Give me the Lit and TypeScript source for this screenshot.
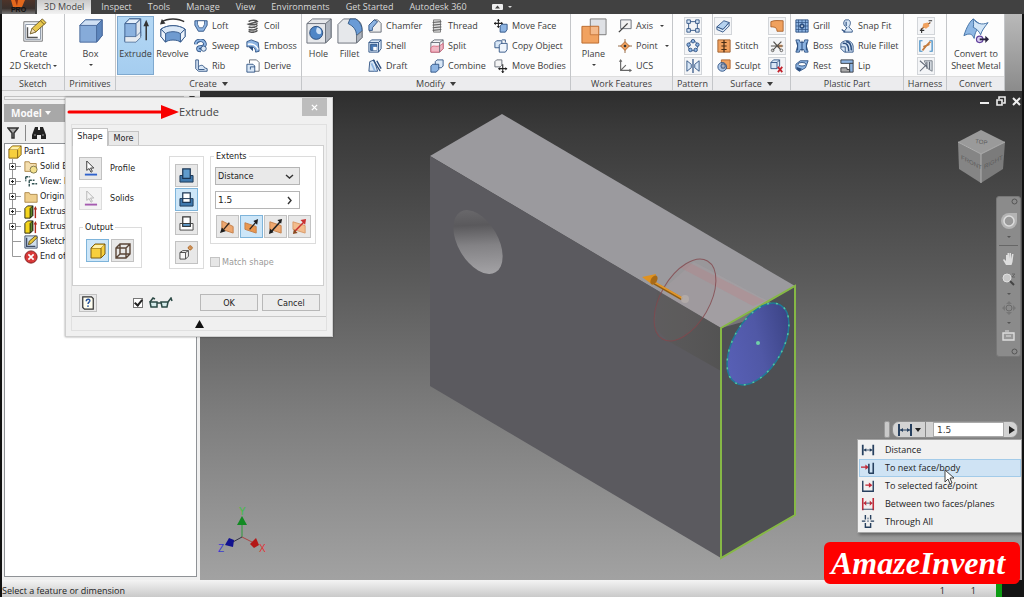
import { LitElement, html, svg, css, SVGTemplateResult, TemplateResult } from "lit";
import { customElement, state } from "lit/decorators.js";
import { classMap } from "lit/directives/class-map.js";

type Glyph = SVGTemplateResult;

const N = "#2c4f80";
const B = "#8db4e2";
const L = "#d9e7f6";
const G = "#5f6670";
const O = "#f0a15e";

/* 16 x 16 ribbon glyphs */
const glyphs: Record<string, Glyph> = {
  loft: svg`<path d="M1 2h14v5l-4 7H5L1 7z" fill=${B} stroke=${N}/><path d="M4 2v4l2 4h4l2-4V2z" fill="#fff" stroke=${N} stroke-width=".8"/>`,
  sweep: svg`<path d="M2 6c0-5 8-6 10-2s-2 5-5 5-4 4 1 4" fill="none" stroke=${N} stroke-width="4"/><path d="M2 6c0-5 8-6 10-2s-2 5-5 5-4 4 1 4" fill="none" stroke=${B} stroke-width="2.2"/><circle cx="11" cy="11" r="3" fill=${L} stroke=${N}/>`,
  rib: svg`<path d="M2 1h3v8c3-3 6-2 7 1l3 1v3H5l-3-3z" fill=${L} stroke=${N}/><path d="M5 9v3h7" fill="none" stroke=${N}/>`,
  coil: svg`<g fill="none" stroke="#555" stroke-width="1.8"><path d="M3 3c2-2 9-2 10 0L3 6c2 1 9 1 10-1M3 9c2 1 9 1 10-2M3 12c2 1 9 1 10-2M3 14c2 2 9 1 10-1"/></g>`,
  emboss: svg`<path d="M1 3l5-2 8 3 1 10-4 1C11 9 7 8 1 9z" fill=${B} stroke=${N}/><path d="M2 6c5-1 10 1 12 6" fill="none" stroke="#fff" stroke-width="1.6"/><path d="M3 9h5v5z" fill=${N}/>`,
  derive: svg`<path d="M4 5V1h8l3 3v10H9" fill="#fff" stroke=${G}/><path d="M1 6h7l2 2v7H1z" fill=${L} stroke=${N}/><path d="M5 12V9h5" fill="none" stroke=${N}/>`,
  chamfer: svg`<path d="M2 7l5-6h4l4 4v10H2z" fill="#eee" stroke=${G}/><path d="M1 7l6-6 4 2-6 7v3H1z" fill=${B} stroke=${N}/>`,
  shell: svg`<path d="M1 4l3-3h11v10l-3 4H1z" fill=${L} stroke=${N}/><path d="M1 4h11v11M12 4l3-3" fill="none" stroke=${N}/><path d="M3 6h7v7H3z" fill="#4a7ab5" stroke=${N}/><path d="M6 9h4v4H6z" fill="#fff"/>`,
  draft: svg`<path d="M2 3l5-2 4 13H1z" fill=${L} stroke=${N}/><path d="M6 1l8 13M10 2l5 9" fill="none" stroke=${N} stroke-width="1.6"/><path d="M4 5l4 9" stroke=${B} stroke-width="2"/>`,
  thread: svg`<path d="M4 1h8v14H4z" fill="#ddd" stroke="#777"/><path d="M3 4l10-1M3 7l10-1M3 10l10-1M3 13l10-1" stroke="#666" stroke-width="1.3"/>`,
  split: svg`<path d="M1 4l4-3h10v10l-4 4H1z" fill="#f3f3f6" stroke=${G}/><path d="M1 10c4-5 6 2 14-5v6l-4 4H1z" fill="#f0b7c4" stroke="#d5647a"/><path d="M1 4h10v11M11 4l4-3" fill="none" stroke=${G}/>`,
  combine: svg`<path d="M6 3l2-2h7v7l-2 2H6z" fill=${L} stroke=${N}/><path d="M1 8l2-2h7v6l-3 3H1z" fill=${B} stroke=${N}/>`,
  moveface: svg`<path d="M5 0v10M0 5h10" stroke="#222" stroke-width="1.2"/><path d="M5 0l2 2H3zM5 10l2-2H3zM0 5l2-2v4zM10 5L8 3v4z" fill="#222"/><path d="M7 8l2-2h6v6l-2 3H7z" fill=${B} stroke=${N}/>`,
  copy: svg`<path d="M1 4l2-2h6v6l-2 2H1z" fill=${L} stroke=${N}/><path d="M6 7l2-2h7v7l-2 3H6z" fill="#eef4fb" stroke=${N}/><path d="M9 1h4v3" fill="none" stroke=${N}/>`,
  movebodies: svg`<path d="M1 3l2-2h6v6l-2 2H1z" fill="#f4f4f4" stroke=${G}/><path d="M10 6v10M5 11h10" stroke="#222" stroke-width="1.2"/><path d="M10 16l2-2H8zM15 11l-2-2v4zM5 11l2-2v4z" fill="#222"/>`,
  axis: svg`<path d="M3 1h12v10H3z" fill="#f2f2f2" stroke=${G}/><path d="M1 15L11 5" stroke="#444" stroke-width="1.6"/>`,
  point: svg`<path d="M8 0v16M0 8h16" stroke="#8a5a30"/><path d="M8 3l5 5-5 5-5-5z" fill=${O} stroke="#a8602a"/><circle cx="8" cy="8" r="1.5" fill="#333"/>`,
  ucs: svg`<path d="M3 1v12h12M3 13l6-6" fill="none" stroke="#666" stroke-width="1.3"/><path d="M3 0l2 3H1zM16 13l-3-2v4z" fill="#666"/>`,
  rect: svg`<path d="M3 3h10v10H3z" fill="none" stroke=${N}/><g fill=${L} stroke=${N}><path d="M1 1h4v4H1zM11 1h4v4h-4zM1 11h4v4H1zM11 11h4v4h-4z"/></g>`,
  circ: svg`<circle cx="8" cy="8" r="5.5" fill="none" stroke=${N}/><g fill=${B} stroke=${N}><circle cx="8" cy="2.5" r="2"/><circle cx="13" cy="6.5" r="2"/><circle cx="11" cy="12.5" r="2"/><circle cx="5" cy="12.5" r="2"/><circle cx="3" cy="6.5" r="2"/></g>`,
  mirror: svg`<path d="M1 2l5 4v4l-5 4zM15 2l-5 4v4l5 4z" fill=${L} stroke=${N}/><path d="M8 0v16" stroke=${N} stroke-width="1.4"/>`,
  thicken: svg`<path d="M1 9l8-7 6 2-7 8z" fill="#b5d2ef" stroke=${N}/><path d="M1 9v3l7 3 7-7V4L8 12z" fill=${L} stroke=${N}/>`,
  stitch: svg`<path d="M1 1h14v14H1z" fill=${O} stroke="#9a5a28"/><path d="M8 1v14M5 4h6M5 8h6M5 12h6" stroke="#4a2d14" stroke-width="1.4"/>`,
  sculpt: svg`<path d="M5 1h10v10H5z" fill=${O} stroke="#a8602a"/><circle cx="6" cy="9" r="5" fill="#8db4e2" fill-opacity=".7" stroke=${N}/><circle cx="7" cy="8" r="2.5" fill="none" stroke=${N}/>`,
  patch: svg`<path d="M1 3c5-2 9-1 14-1v12H8c0-4-2-5-7-5z" fill=${O} stroke="#a8602a"/>`,
  trim: svg`<path d="M8 8h6" stroke=${O} stroke-width="3"/><path d="M1 8h14M3 13L13 3M4 3l8 9" stroke="#54524f" stroke-width="1.4"/><circle cx="3" cy="13" r="1.5" fill="none" stroke="#54524f"/><circle cx="13" cy="13" r="1.5" fill="none" stroke="#54524f"/>`,
  delface: svg`<path d="M1 4l3-3h7v7l-3 3H1z" fill=${L} stroke=${N}/><path d="M1 4h7v7M8 4l3-3" fill="none" stroke=${N}/><path d="M9 9l5 6M14 9l-5 6" stroke="#c3202a" stroke-width="2"/>`,
  grill: svg`<path d="M1 1h14v14H1z" fill=${B} stroke=${N}/><path d="M4 1v14M8 1v14M12 1v14M1 4h14M1 8h14M1 12h14" stroke=${N} stroke-width=".8"/><circle cx="8" cy="8" r="3" fill=${N}/><circle cx="8" cy="8" r="1" fill="#fff"/>`,
  boss: svg`<path d="M1 1h4l1 3h4l1-3h4l-2 7 2 7h-4l-1-3H6l-1 3H1l2-7z" fill=${B} stroke=${N}/><path d="M8 2v12M3 4v9M13 4v9" stroke=${N} stroke-width="1.2"/>`,
  rest: svg`<path d="M1 6l5-4h9l-3 8-7 4-4-3z" fill=${B} stroke=${N}/><ellipse cx="8" cy="6" rx="4.5" ry="2" fill="#fff" stroke=${N}/><path d="M2 9l6 2-3 3-3-2z" fill=${N}/>`,
  snap: svg`<path d="M6 1h4c3 2 2 6 0 8l4 4v2H4l4-5c-4-2-5-6-2-9z" fill=${L} stroke=${N}/><path d="M7 3v5M2 12l4 3" stroke=${N} stroke-width="1.3"/>`,
  rule: svg`<path d="M1 5c4-5 13-4 14 3v7H5l-4-4z" fill=${L} stroke=${N}/><path d="M3 5c5-1 7 3 7 9M7 3c4 0 6 4 6 10" fill="none" stroke=${N} stroke-width="1.8"/><path d="M1 9h5v6" fill="none" stroke=${N}/>`,
  lip: svg`<path d="M1 1h14v4H1z" fill=${B} stroke="#32363c"/><path d="M11 5h4v10h-4z" fill=${B} stroke="#32363c"/><path d="M1 10h7v2h3v3H1z" fill="#aaa" stroke="#32363c"/>`,
  pin: svg`<path d="M2 12l11-8" stroke="#7a4b28" stroke-width="1.5"/><path d="M5 5l5-1 2 4-4 3-4-2z" fill=${O}/><path d="M11 2h4M1 13h5M3 11v5" stroke="#333" stroke-width="1.3"/>`,
  cable: svg`<path d="M4 2H1v12h3M12 2h3v12h-3" fill="none" stroke="#3f8ac4" stroke-width="1.4"/><path d="M4 13l4-5 5-5M5 9l7-3" stroke="#c47a3c" stroke-width="2"/>`,
  harness: svg`<path d="M6 2h9v12l-5-3z" fill="#d5dae0" stroke="#737a85"/><path d="M1 2l8 7M1 14l7-7M9 3v8M12 3v9" stroke="#626a78" stroke-width="1.2"/>`,
  folder: svg`<path d="M1 3h5l1 2h8v9H1z" fill="#efcf8d" stroke="#a98443"/>`,
  solids: svg`<path d="M1 2h5l1 2h7v9H1z" fill="#f4deae" stroke="#a98443"/><circle cx="11" cy="11" r="4" fill="#f3e08c" stroke="#77724c"/>`,
  view: svg`<path d="M2 2h5M2 2v5M6 6h6M6 6v8M9 10h6" fill="none" stroke="#355" stroke-width="1.6" stroke-dasharray="3 1"/>`,
  cube: svg`<path d="M1 5l4-4h10v10l-4 4H1z" fill="#f7cf3d" stroke="#7d5c12"/><path d="M1 5h10v10M11 5l4-4" fill="none" stroke="#7d5c12"/><path d="M2 5l3-3h9l-3 3z" fill="#fff0a8"/>`,
  extr: svg`<path d="M1 4l3-3h6v11l-3 3H1z" fill="#f4d51e" stroke="#1c1c10"/><path d="M7 4l3-3v11l-3 3z" fill="#5f8a2c" stroke="#1c1c10"/><path d="M13 15V4" stroke="#b02a20" stroke-width="1.6"/><path d="M13 1l2 4h-4z" fill="#b02a20"/>`,
  sketch: svg`<path d="M1 1h14v14H1z" fill="#cfdeed" stroke="#3c4a66"/><path d="M3 3v10h10" fill="none" stroke="#3c4a66" stroke-width="1.5"/><path d="M5 11l1-4 7-6 2 2-7 7z" fill="#e9c73a" stroke="#5c4a12"/>`,
  end: svg`<circle cx="8" cy="8" r="7" fill="#d93838" stroke="#7c1717"/><path d="M5 5l6 6M11 5l-6 6" stroke="#fff" stroke-width="2"/>`,
  cursor: svg`<path d="M4 0v10l2.500-2 2 4 1.500-1-2-3.500h3.500z" fill="#fff" stroke="#333"/><path d="M2 14.500h13" stroke="#2f62cc" stroke-width="2"/>`,
  cursorOff: svg`<path d="M4 0v10l2.500-2 2 4 1.500-1-2-3.500h3.500z" fill="#f4f4f4" stroke="#b5b5b5"/><path d="M2 14.500h13" stroke="#a55bb0" stroke-width="2"/>`,
  wire: svg`<path d="M1 5l4-4h10v10l-4 4H1zM1 5h10v10M11 5l4-4M5 1v10h10M5 11l-4 4" fill="none" stroke="#5a4638" stroke-width="1.4"/>`,
  join: svg`<path d="M1 8h14v7H1z" fill="#3f78ad" stroke="#1b3654"/><path d="M4 1h8v10H4z" fill="#5f9bcc" stroke="#1b3654" stroke-width="1.3"/>`,
  cut: svg`<path d="M1 7h14v8H1z" fill="#3f78ad" stroke="#1b3654"/><path d="M4 1h8v10H4z" fill="#fff" stroke="#1b3654" stroke-width="1.3"/><path d="M4 7h8" stroke="#1b3654"/>`,
  intersect: svg`<path d="M1 8h14v7H1z" fill="#fff" stroke="#444"/><path d="M4 1h8v10H4z" fill="#fff" stroke="#333" stroke-width="1.3"/><path d="M4 8h8v3H4z" fill="#5f9bcc" stroke="#333"/>`,
  newsolid: svg`<path d="M1 8l3-2h6v6l-3 3H1zM1 8h6v7M7 8l3-2" fill="#f7f7f7" stroke="#444"/><circle cx="12" cy="3" r="2" fill="#f2c490" stroke="#b26c2c"/><path d="M12 0v6M9 3h6" stroke="#b26c2c" stroke-width=".6"/>`,
  dir1: svg`<path d="M2 2l12 6v7L2 11z" fill="#eda76f" stroke="#c47f49"/><path d="M4 11l6-7" stroke="#32251c" stroke-width="1.4"/><path d="M0 15l2-6 4 4z" fill="#1c1c1c"/>`,
  dir2: svg`<path d="M1 4l12 4v7L1 11z" fill="#e9974f" stroke="#c47f49"/><path d="M6 11l7-8" stroke="#222" stroke-width="1.4"/><path d="M15 0l-1 6-4-4z" fill="#1c1c1c"/>`,
  dir3: svg`<path d="M2 3l12 4v8L2 11z" fill="#eda76f" stroke="#c47f49"/><path d="M3 14L13 3" stroke="#222" stroke-width="1.6"/><path d="M15 0l-1 5-4-4zM1 16l1-6 4 4z" fill="#1c1c1c"/>`,
  dir4: svg`<path d="M1 3l13 4v8L1 11z" fill="#f3bd8e" stroke="#d99a68"/><path d="M3 13L13 3" stroke="#c93030" stroke-width="1.6"/><path d="M15 0l-1 6-5-5z" fill="#c93030"/><path d="M1 16l1-5 4 4z" fill="#8a4a20"/>`,
  help: svg`<path d="M2 1h10l2 2v12H4l-2-2z" fill="#fffef0" stroke="#333" stroke-width="1.4"/><path d="M6 6c0-3 5-3 4 0-.5 1-2 1.500-2 3" fill="none" stroke="#234f9c" stroke-width="1.6"/><circle cx="8" cy="11.500" r="1" fill="#234f9c"/>`,
  mDist: svg`<path d="M2 2v12M14 2v12" stroke="#27405f" stroke-width="2"/><path d="M3 8h10" stroke="#27405f"/><path d="M3 8l3-2v4zM13 8l-3-2v4z" fill="#27405f"/>`,
  mNext: svg`<path d="M0 7h7" stroke="#c22b3a" stroke-width="1.5"/><path d="M9 7L5 4v6z" fill="#c22b3a"/><path d="M14 2v12H9M9 3v11" fill="none" stroke="#27405f" stroke-width="1.8"/>`,
  mSel: svg`<path d="M2 2v12h12V2" fill="none" stroke="#27405f" stroke-width="1.6"/><path d="M5 7h6" stroke="#c22b3a" stroke-width="1.5"/><path d="M13 7L9 4v6z" fill="#c22b3a"/>`,
  mTwo: svg`<path d="M2 1v14M14 1v14" stroke="#c22b3a" stroke-width="1.8"/><path d="M3 7h10M2 14h12" stroke="#27405f"/><path d="M3 7l3-3v6zM13 7l-3-3v6z" fill="#c22b3a"/>`,
  mAll: svg`<path d="M5 0v5M11 0v5M1 7h4M11 7h4M5 9v5h6V9" fill="none" stroke="#27405f" stroke-width="1.6"/><path d="M8 3v5" stroke="#27405f" stroke-dasharray="2 1"/>`,
};

/* 28 x 28 ribbon glyphs */
const bigGlyphs: Record<string, Glyph> = {
  sketch2d: svg`<path d="M3 4h20v21H3z" fill="#eef2f6" stroke="#777"/><path d="M5 7h16v16H5z" fill="#fff" stroke="#8a96a6"/><path d="M7 10v11h11" fill="none" stroke="#555" stroke-width="1.5"/><path d="M10 17l2-6L23 1l4 4-11 10z" fill="#e8c84e" stroke="#6e5a22"/><path d="M10 17l2-6 4 4z" fill="#f2ddb8" stroke="#6e5a22" stroke-width=".7"/><path d="M21 3l4 4" stroke="#6e5a22"/>`,
  box: svg`<path d="M2 8l6-6h18v17l-6 7H2z" fill="#86abd9" stroke="#48699a"/><path d="M2 8l6-6h18l-6 6z" fill="#cfe0f4" stroke="#48699a"/><path d="M20 8l6-6v17l-6 7z" fill="#5d86bd" stroke="#48699a"/>`,
  extrude: svg`<path d="M2 6l5-5h12v18l-5 6H2z" fill="#8bb2df" stroke="#3c5e8c"/><path d="M2 6l5-5h12l-5 5z" fill="#e4effb" stroke="#3c5e8c"/><path d="M14 6l5-5v18l-5 6z" fill="#dfe6ee" stroke="#3c5e8c"/><path d="M2 20h12l5-5v6l-5 5H2z" fill="#e6ebf1" stroke="#3c5e8c" stroke-width=".8"/><path d="M25 24V7" stroke="#333" stroke-width="1.6"/><path d="M25 2l3 7h-6z" fill="#333"/>`,
  revolve: svg`<path d="M2 4c6-4 18-4 24 0" fill="none" stroke="#333" stroke-width="1.6"/><path d="M0 7l2-6 4 5z" fill="#333"/><path d="M1 12c7-5 19-5 26 0v8l-5 6c-3-3-13-3-16 0l-5-6z" fill="#6f9bd0" stroke="#335889"/><path d="M1 12c7-5 19-5 26 0l-5 5c-3-3-13-3-16 0z" fill="#dce9f7" stroke="#335889"/><path d="M6 17v9l-5-6v-8zM22 17v9l5-6v-8z" fill="#eef4fb" stroke="#335889"/>`,
  hole: svg`<path d="M1 6l6-5h20v20l-6 6H1z" fill="#e6e8eb" stroke="#686e78"/><path d="M21 6l6-5v20l-6 6z" fill="#aeb4bd" stroke="#686e78"/><path d="M1 6h20" stroke="#686e78"/><circle cx="11" cy="16" r="7" fill="#4f86c6" stroke="#274a78"/><path d="M12 10c4 1 5 4 4 7-3 2-7-2-4-7z" fill="#cfe2f6"/>`,
  fillet: svg`<path d="M1 7l6-6h13c5 2 7 6 7 12v8l-6 6H1z" fill="#e6e8eb" stroke="#686e78"/><path d="M14 1h6c5 3 7 8 7 13l-6 5c0-6-3-10-9-13z" fill="#6a9bd6" stroke="#305683"/><path d="M21 19l6-5v7l-6 6z" fill="#aeb4bd" stroke="#686e78"/>`,
  plane: svg`<path d="M10 1h17v17H10z" fill="#dfe1e5" stroke="#777"/><path d="M1 9h18v18H1z" fill="#f09a52" fill-opacity=".92" stroke="#b9682b"/><path d="M10 9h9v9h-9z" fill="#f4b98a" stroke="#b9682b" stroke-width=".7"/>`,
  convert: svg`<path d="M1 19C4 9 8 3 11 1l10 8c-6 2-8 6-9 13-2-5-5-6-11-3z" fill="#8fb8e4" stroke="#3f6ea3"/><path d="M11 1c4 5 9 7 16 4-4 5-7 9-8 13-2-4-4-6-8-8 1-4 0-6 0-9z" fill="#d3e6f7" stroke="#3f6ea3"/><circle cx="18" cy="23" r="3.500" fill="#d9cdf0" stroke="#5f3f9c" stroke-width="1.3"/><path d="M18 23h7" stroke="#26203c" stroke-width="2"/><path d="M28 23l-4-4v8z" fill="#26203c"/>`,
};

const icon = (name: string): TemplateResult =>
  html`<svg class="ic" viewBox="0 0 16 16" aria-hidden="true">${glyphs[name]}</svg>`;

interface Tool { id: string; text?: string; more?: boolean; boxed?: boolean }
interface Big { id: string; lines: string[]; more?: boolean; on?: boolean }
interface Panel { key: string; title: string; more?: boolean; big: Big[]; cols: Tool[][] }

const panels: Panel[] = [
  { key: "sketch", title: "Sketch", big: [{ id: "sketch2d", lines: ["Create", "2D Sketch"], more: true }], cols: [] },
  { key: "prims", title: "Primitives", big: [{ id: "box", lines: ["Box"], more: true }], cols: [] },
  {
    key: "create", title: "Create", more: true,
    big: [{ id: "extrude", lines: ["Extrude"], on: true }, { id: "revolve", lines: ["Revolve"] }],
    cols: [
      [{ id: "loft", text: "Loft" }, { id: "sweep", text: "Sweep" }, { id: "rib", text: "Rib" }],
      [{ id: "coil", text: "Coil" }, { id: "emboss", text: "Emboss" }, { id: "derive", text: "Derive" }],
    ],
  },
  {
    key: "modify", title: "Modify", more: true,
    big: [{ id: "hole", lines: ["Hole"] }, { id: "fillet", lines: ["Fillet"] }],
    cols: [
      [{ id: "chamfer", text: "Chamfer" }, { id: "shell", text: "Shell" }, { id: "draft", text: "Draft" }],
      [{ id: "thread", text: "Thread" }, { id: "split", text: "Split" }, { id: "combine", text: "Combine" }],
      [{ id: "moveface", text: "Move Face" }, { id: "copy", text: "Copy Object" }, { id: "movebodies", text: "Move Bodies" }],
    ],
  },
  {
    key: "work", title: "Work Features", big: [{ id: "plane", lines: ["Plane"], more: true }],
    cols: [[{ id: "axis", text: "Axis", more: true }, { id: "point", text: "Point", more: true }, { id: "ucs", text: "UCS" }]],
  },
  {
    key: "pattern", title: "Pattern", big: [],
    cols: [[{ id: "rect", boxed: true }, { id: "circ", boxed: true }, { id: "mirror", boxed: true }]],
  },
  {
    key: "surface", title: "Surface", more: true, big: [],
    cols: [
      [{ id: "thicken", boxed: true }, { id: "stitch", text: "Stitch" }, { id: "sculpt", text: "Sculpt" }],
      [{ id: "patch", boxed: true }, { id: "trim", boxed: true }, { id: "delface", boxed: true }],
    ],
  },
  {
    key: "plastic", title: "Plastic Part", big: [],
    cols: [
      [{ id: "grill", text: "Grill" }, { id: "boss", text: "Boss" }, { id: "rest", text: "Rest" }],
      [{ id: "snap", text: "Snap Fit" }, { id: "rule", text: "Rule Fillet" }, { id: "lip", text: "Lip" }],
    ],
  },
  {
    key: "harness", title: "Harness", big: [],
    cols: [[{ id: "pin", boxed: true }, { id: "cable", boxed: true }, { id: "harness", boxed: true }]],
  },
  { key: "convert", title: "Convert", big: [{ id: "convert", lines: ["Convert to", "Sheet Metal"] }], cols: [] },
];

const tabs = ["Inspect", "Tools", "Manage", "View", "Environments", "Get Started", "Autodesk 360"];

const tree = [
  { icon: "solids", text: "Solid Bodies(1)", plus: true },
  { icon: "view", text: "View: Master", plus: true },
  { icon: "folder", text: "Origin", plus: true },
  { icon: "extr", text: "Extrusion1", plus: true },
  { icon: "extr", text: "Extrusion2", plus: true },
  { icon: "sketch", text: "Sketch3", plus: false },
  { icon: "end", text: "End of Part", plus: false },
];

const extents = [
  { icon: "mDist", text: "Distance" },
  { icon: "mNext", text: "To next face/body" },
  { icon: "mSel", text: "To selected face/point" },
  { icon: "mTwo", text: "Between two faces/planes" },
  { icon: "mAll", text: "Through All" },
];

@customElement("app-root")
export class AppRoot extends LitElement {
  @state() private hot = 1;
  @state() private op = "cut";
  @state() private dir = "dir2";

  static styles = css`
    :host {
      display: grid;
      grid-template-rows: 14px auto minmax(0, 1fr) 17px;
      height: 100vh;
      overflow: hidden;
      position: relative;
      background: #2e2e2e;
      color: #3c3c3c;
      font: 9px/12px "Open Sans", "Noto Sans", sans-serif;
    }
    * { box-sizing: border-box; }
    button, input, select {
      font: inherit;
      color: inherit;
      margin: 0;
      padding: 0;
      border: 0;
      border-radius: 0;
      background: none;
      min-width: 0;
    }
    svg { display: block; flex: none; }
    .ic { width: 14px; height: 14px; }
    .caret {
      width: 0; height: 0; flex: none;
      border: 3px solid transparent;
      border-top: 4px solid currentColor;
      border-bottom: 0;
    }
    .caret.tiny { border-width: 2px; border-top-width: 2px; border-bottom: 0; }

    /* menu tabs */
    .tabs { display: flex; background: #414141; color: #d8d8d8; }
    .logo {
      width: 33px; margin: 0 2px;
      background: linear-gradient(#4e3429, #39302c 60%, #777);
      display: flex; align-items: flex-end; justify-content: center;
      position: relative; color: #111;
      font: bold 7px/8px "Liberation Sans", sans-serif;
    }
    .logo svg { position: absolute; left: 8px; top: 0; }
    .logo span { position: relative; }
    .tabs a { color: inherit; text-decoration: none; line-height: 13px; padding: 0 8px; white-space: nowrap; }
    .tabs a.on { background: linear-gradient(#c9c9c9, #f2f2f2); color: #444; padding: 0 7px; margin-right: 2px; }
    .tabs .extra { display: flex; align-items: center; gap: 5px; padding: 0 17px; height: 13px; }

    /* ribbon */
    .ribbon {
      display: flex;
      background: linear-gradient(#b9b9b9, #8b8b8b);
      border: solid #111;
      border-width: 0 2px;
      height: 77px;
    }
    .panel {
      display: flex; flex-direction: column;
      background: #fdfdfd;
      border-right: 1px solid #c4c6c9;
      flex: none;
    }
    .tools { flex: 1; display: grid; padding: 2px 0 0 1px; }
    .panel h2 {
      margin: 0; height: 15px;
      border-top: 1px solid #dedede;
      border-bottom: 1px solid #c8c8c8;
      background: #ececee;
      font: inherit; line-height: 13px;
      display: flex; justify-content: center; align-items: center; gap: 5px;
      white-space: nowrap;
    }
    .sketch { width: 63px; }
    .prims { width: 51px; }
    .create { width: 186px; }
    .create .tools { grid-template-columns: 37px 37px 52px 1fr; }
    .modify { width: 269px; }
    .modify .tools { grid-template-columns: 31px 31px 62px 64px 1fr; }
    .work { width: 102px; }
    .work .tools { grid-template-columns: 43px 1fr; }
    .pattern { width: 40px; }
    .surface { width: 78px; }
    .surface .tools { grid-template-columns: 54px 1fr; }
    .plastic { width: 113px; }
    .plastic .tools { grid-template-columns: 45px 1fr; }
    .harness { width: 43px; }
    .convert { width: 58px; }
    .pattern .col, .harness .col { justify-items: center; }
    .big {
      display: flex; flex-direction: column; align-items: center;
      height: 59px; padding-top: 1px;
      border: 1px solid transparent;
      white-space: nowrap;
    }
    .big.on { background: linear-gradient(#b4d8f5, #a5cdef); border-color: #7fa9cf; }
    .big svg { width: 26px; height: 26px; margin-bottom: 4px; }
    .big span { display: flex; align-items: center; gap: 2px; }
    .big .caret { margin-top: 4px; }
    .big span .caret { margin-top: 0; }
    .col { display: grid; grid-template-rows: repeat(3, 20px); justify-items: start; align-items: center; }
    .tool { display: flex; align-items: center; gap: 4px; padding: 0 3px; white-space: nowrap; }
    .tool .caret { margin-left: 3px; }
    .tool.boxed { width: 18px; height: 18px; padding: 0; justify-content: center; border: 1px solid #d2d5d9; background: #f4f5f7; }

    /* workspace */
    .work-area {
      display: grid; grid-template-columns: 198px minmax(0, 1fr);
      border: solid #111; border-width: 0 2px;
      position: relative;
      min-height: 0;
    }
    .side { background: #efefef; display: flex; flex-direction: column; padding: 0 3px 3px 2px; min-height: 0; }
    .grip { height: 13px; display: flex; align-items: center; justify-content: flex-end; padding-right: 2px; }
    .grip::before { content: ""; flex: 1; height: 2px; border: 1px solid #c2c2c2; margin-right: 5px; }
    .side h3 {
      margin: 0; height: 18px; padding-left: 7px;
      background: #a8a8a8; color: #fafafa;
      font: bold 10px/18px "Open Sans", sans-serif;
      display: flex; align-items: center; gap: 3px;
    }
    .sbar { height: 21px; display: flex; align-items: center; gap: 6px; padding-left: 3px; color: #333; }
    .sbar i { width: 1px; height: 16px; background: #888; }
    .tree {
      flex: 1; margin: 0; padding: 0; list-style: none;
      background: #fff; border: 1px solid #8f9296;
      font: 9px/15px "DejaVu Sans Condensed", "DejaVu Sans", sans-serif;
      color: #222; overflow: hidden; white-space: nowrap;
    }
    .tree li { display: flex; align-items: center; gap: 2px; height: 15px; padding-left: 3px; }
    .tree .twig { width: 14px; height: 15px; }

    .view { position: relative; min-width: 0; min-height: 0; overflow: hidden; background: linear-gradient(#2e2e2e, #3a3a3a 8%, #5a5a5a 38%, #7d7d7d 66%, #a2a2a2); }
    .scene { width: 100%; height: 100%; }
    .winctl { position: absolute; right: 0; top: 5px; display: flex; gap: 5px; color: #eee; }
    .winctl svg { width: 11px; height: 11px; }
    .nav {
      position: absolute; right: 1px; top: 105px; width: 25px; height: 161px;
      border: 1px solid #777; border-radius: 3px; background: #8b8b8b;
      display: flex; flex-direction: column; align-items: center; justify-content: space-between;
      padding: 1px 2px;
      color: #555;
    }
    .nav button { display: block; }
    .nav hr { width: 100%; margin: 0; border: 0; border-top: 1px solid #666; }
    .nav .end { align-self: flex-end; }

    .mini { position: absolute; right: 4px; top: 330px; display: flex; height: 17px; gap: 2px; }
    .mini .hold { width: 6px; background: #c9c9c9; border: 1px solid #999; border-radius: 2px; }
    .mini .pill {
      display: flex; align-items: stretch;
      background: #d3d3d3; border: 1px solid #8e8e8e; border-radius: 7px;
      overflow: hidden;
    }
    .mini .pick { display: flex; align-items: center; gap: 2px; padding: 0 4px; width: 33px; color: #222; border-right: 1px solid #888; }
    .mini .pick .ic { width: 16px; height: 16px; }
    .mini input { width: 71px; margin: 0 2px 0 7px; padding-left: 3px; background: #fff; border: 1px solid #aaa; font: 9px/12px "DejaVu Sans", sans-serif; }
    .mini .go { width: 11px; display: grid; place-items: center; }

    .menu {
      position: absolute; right: 0; top: 348px; width: 165px;
      margin: 0; padding: 1px 0 1px 1px; list-style: none;
      background: #f1f1f1; border: 1px solid #a5a5a5;
      box-shadow: 2px 2px 3px #0005;
    }
    .menu button { display: flex; align-items: center; gap: 10px; width: 100%; height: 18px; padding-left: 1px; border: 1px solid transparent; white-space: nowrap; color: #222; }
    .menu button.hot { background: #cfe3f4; border-color: #a3cbe9; }
    .pointer { position: absolute; right: 67px; top: 378px; }

    .brand {
      position: absolute; right: 4px; bottom: 13px; width: 196px; height: 42px;
      background: #fe0000; border-radius: 6px; color: #fff;
      font: italic bold 32px/42px "Liberation Serif", serif;
      padding-left: 7px; white-space: nowrap;
    }

    /* dialog */
    .dialog {
      position: absolute; left: 63px; top: 6px; width: 268px;
      background: #f0f0f0; border: 1px solid #cfcfcf;
      padding: 0 5px 5px;
      font: 9px/12px "DejaVu Sans Condensed", "DejaVu Sans", sans-serif;
      color: #222;
      box-shadow: 0 0 2px #0006;
    }
    .title { display: grid; grid-template-columns: 1fr auto 1fr; align-items: start; height: 26px; color: #444; }
    .title h1 { grid-column: 2; margin: 0; font: 11px/28px "Open Sans", sans-serif; }
    .title button { justify-self: end; width: 25px; height: 18px; background: #bdbdbd; color: #fff; display: grid; place-items: center; }
    .inner { border: 1px solid #e0e0e0; }
    .dtabs { display: flex; align-items: flex-end; height: 20px; padding-top: 2px; }
    .dtabs button { height: 14px; width: 31px; padding-bottom: 1px; background: #e9e9e9; border: 1px solid #c3c3c3; border-bottom: 0; }
    .dtabs button.on { height: 18px; width: 36px; padding-bottom: 4px; background: #fff; margin-bottom: -1px; position: relative; }
    .page {
      display: grid; grid-template-columns: 90px 41px 1fr;
      background: #fff; border: 1px solid #cfcfcf; margin-right: 2px;
      height: 141px; padding: 4px 7px 0 6px;
    }
    .left { padding-top: 7px; display: grid; grid-template-rows: 30px 34px auto; align-content: start; width: 63px; }
    .row { display: flex; align-items: flex-start; gap: 8px; line-height: 23px; }
    .sq { width: 23px; height: 23px; display: grid; place-items: center; background: #e8e8e8; border: 1px solid #c2c2c2; flex: none; }
    .sq .ic { width: 16px; height: 16px; }
    .left .row .ic, .dirs .ic { width: 15px; height: 15px; }
    .sq.on { background: #cde6f8; border-color: #7eb4da; }
    .sq.off { background: #f3f3f3; border-color: #dcdcdc; }
    fieldset { margin: 0; padding: 0; border: 1px solid #dcdcdc; min-width: 0; }
    legend { padding: 0 2px; margin-left: 3px; }
    .out { height: 47px; }
    .out div { display: flex; gap: 2px; padding: 6px 0 0 6px; }
    .ops { width: 35px; height: 113px; margin-top: 6px; border: 1px solid #dcdcdc; display: flex; flex-direction: column; align-items: center; gap: 1px; padding-top: 7px; }
    .ops .sq:last-child { margin-top: 5px; }
    .ops .ic { width: 15px; height: 15px; }
    .ext { height: 94px; }
    .fields { display: grid; gap: 6px; padding: 5px 15px 0 4px; }
    .combo { display: grid; grid-template-columns: 1fr 14px; align-items: center; height: 18px; background: #e9e9e9; border: 1px solid #b5b5b5; }
    .combo.edit { background: #fff; }
    .combo > select, .combo > input { grid-area: 1 / 1 / 2 / 3; width: 100%; height: 16px; padding-left: 2px; appearance: none; }
    .combo > input { font-family: "DejaVu Sans", sans-serif; }
    .combo > svg { grid-area: 1 / 2; pointer-events: none; }
    .dirs { display: flex; gap: 1px; padding: 6px 0 0 5px; }
    .match { display: flex; align-items: center; gap: 2px; margin-top: 12px; color: #9a9a9a; }
    input[type="checkbox"] { appearance: none; width: 10px; height: 10px; border: 1px solid #777; background: #fff; display: grid; place-items: center; flex: none; }
    input[type="checkbox"]:disabled { border-color: #c4c4c4; background: #e6e6e6; }
    input[type="checkbox"]:checked::after { content: ""; width: 3px; height: 6px; border: solid #222; border-width: 0 2px 2px 0; rotate: 40deg; margin-top: -2px; }
    .foot { display: flex; align-items: center; height: 31px; padding: 3px 6px 0 7px; border-bottom: 1px solid #c8c8c8; }
    .foot .sq { width: 18px; height: 18px; }
    .foot .sq .ic { width: 14px; height: 14px; }
    .foot label { display: flex; align-items: center; gap: 5px; margin: 0 auto; padding-left: 10px; }
    .foot .push { width: 58px; height: 17px; background: #ececec; border: 1px solid #b8b8b8; }
    .foot .push + .push { margin-left: 4px; }
    .fold { display: grid; place-items: center; width: 100%; height: 13px; }
    .arrow { position: absolute; left: 65px; top: 14px; }

    /* status bar */
    .status {
      display: flex; align-items: flex-end; gap: 26px;
      border: solid #111; border-width: 0 0 0 2px;
      background: linear-gradient(#f4f4f4, #c9c9c9);
      color: #222;
    }
    .status span:first-child { flex: 1; }
    .status .tail { width: 28px; height: 17px; border-left: 6px solid #0d9c14; background: #151515; margin-left: -6px; }
  `;

  private bigTool(b: Big) {
    const last = b.lines.length - 1;
    return html`<button class=${classMap({ big: true, on: !!b.on })}>
      <svg viewBox="0 0 28 28" aria-hidden="true">${bigGlyphs[b.id]}</svg>
      ${b.lines.map((t, i) => html`<span>${t}${b.more && i === last && last > 0 ? html`<i class="caret tiny"></i>` : ""}</span>`)}
      ${b.more && last === 0 ? html`<i class="caret tiny"></i>` : ""}
    </button>`;
  }

  private tool(t: Tool) {
    return html`<button class=${classMap({ tool: true, boxed: !!t.boxed })} aria-label=${t.text ?? t.id}>
      ${icon(t.id)}${t.text ?? ""}${t.more ? html`<i class="caret tiny"></i>` : ""}
    </button>`;
  }

  private sq(id: string, on = false, click?: () => void) {
    return html`<button class=${classMap({ sq: true, on })} aria-label=${id} @click=${click}>${icon(id)}</button>`;
  }

  private scene() {
    return html`<svg class="scene" viewBox="200 91 822 489" preserveAspectRatio="xMinYMin meet" aria-label="Part model">
      <defs>
        <linearGradient id="bore" x1=".65" y1="0" x2=".35" y2="1">
          <stop offset="0" stop-color="#6a696c"/><stop offset=".25" stop-color="#5a595c"/><stop offset=".55" stop-color="#838285"/><stop offset="1" stop-color="#a5a4a7"/>
        </linearGradient>
        <linearGradient id="blue" x1="0" y1="1" x2=".6" y2="0">
          <stop offset="0" stop-color="#5a62bb"/><stop offset=".6" stop-color="#5058a6"/><stop offset="1" stop-color="#3d4588"/>
        </linearGradient>
        <linearGradient id="shade" x1="0" y1="0" x2="1" y2="0">
          <stop offset="0" stop-color="#58564f" stop-opacity=".4"/><stop offset="1" stop-color="#4e4e4b"/>
        </linearGradient>
      </defs>
      <path d="M430 156L502 114L795 286L721 328z" fill="#9b9a9e"/>
      <path d="M430 156L721 328V558L430 386z" fill="#5b5a5f"/>
      <path d="M721 328L795 286V515L721 558z" fill="#4e4f53"/>
      <ellipse cx="478" cy="242" rx="20" ry="35" transform="rotate(-30 478 242)" fill="url(#bore)"/>
      <path d="M694 262L785 310L721 328L660 292z" fill="#aaa3a6" opacity=".45"/>
      <path d="M657 291L721 328V371L668 341L655 328z" fill="url(#shade)" opacity=".6"/>
      <path d="M679 267L690 263L765 301L753 306z" fill="#b98589" opacity=".4"/>
      <path d="M721 328L795 286V515L721 558z" fill="none" stroke="#86b846" stroke-width="2"/>
      <ellipse cx="685" cy="300" rx="24.500" ry="45" transform="rotate(30 685 300)" fill="#8c8482" fill-opacity=".1" stroke="#83474c" stroke-opacity=".8"/>
      <ellipse cx="758" cy="344" rx="24.500" ry="45" transform="rotate(30 758 344)" fill="url(#blue)" stroke="#1f7a96" stroke-width="1.500"/>
      <ellipse cx="758" cy="344" rx="24.500" ry="45" transform="rotate(30 758 344)" fill="none" stroke="#53c5a0" stroke-width="1.500" stroke-dasharray="2 7"/>
      <circle cx="758" cy="343" r="2" fill="#6fd0a8"/>
      <path d="M654 283L682 299" stroke="#8d5c14" stroke-width="3"/><path d="M654 282L682 298" stroke="#e2962a" stroke-width="2"/>
      <path d="M642 277l14-3-3 11z" fill="#e0921f"/><ellipse cx="654" cy="280" rx="3" ry="5" transform="rotate(30 654 280)" fill="#a86a16"/>
      <circle cx="685" cy="299" r="4" fill="#b9b1ac" opacity=".7"/>

      <path d="M242 537V524" stroke="#2e9a3a"/><path d="M242 516l5 9h-10z" fill="#128a22"/>
      <path d="M242 537L231 543" stroke="#334"/><path d="M242 537L254 543" stroke="#a44"/>
      <path d="M225 545l4-7 5 2-1 7z" fill="#12128f"/><path d="M250 544l6-6 3 7-5 3z" fill="#b31717"/>
      <g font-family="Liberation Sans, sans-serif" font-size="10"><text x="239" y="515" fill="#3fbf45">Y</text><text x="218" y="552" fill="#3a3ad0">Z</text><text x="259" y="552" fill="#e03434">X</text></g>

      <path d="M981 130L1005 142L981 154L958 142z" fill="#9a9a9a"/>
      <path d="M958 142L981 154V183L959 169z" fill="#858585"/>
      <path d="M981 154L1005 142L1003 169L981 183z" fill="#7b7b7b"/>
      <path d="M958 142L981 154L1005 142M981 154V183" fill="none" stroke="#b0b0b0"/>
      <g font-family="Liberation Sans, sans-serif" font-size="6" fill="#5c5c5c"><text transform="translate(961 159) skewY(28)">FRONT</text><text transform="translate(984 169) skewY(-28)">RIGHT</text><text transform="translate(975 143) rotate(8)">TOP</text></g>
    </svg>`;
  }

  private dialog() {
    return html`<section class="dialog" role="dialog" aria-label="Extrude">
      <header class="title">
        <h1>Extrude</h1>
        <button aria-label="Close"><svg width="7" height="7" viewBox="0 0 8 8"><path d="M1 1l6 6M7 1L1 7" stroke="#fff" stroke-width="1.600"/></svg></button>
      </header>
      <div class="inner">
        <div class="dtabs" role="tablist">
          <button class="on" role="tab">Shape</button><button role="tab">More</button>
        </div>
        <div class="page">
          <div class="left">
            <label class="row">${this.sq("cursor")}Profile</label>
            <label class="row"><button class="sq off" disabled aria-label="Solids">${icon("cursorOff")}</button>Solids</label>
            <fieldset class="out"><legend>Output</legend><div>${this.sq("cube", true)}${this.sq("wire")}</div></fieldset>
          </div>
          <div class="ops">
            ${["join", "cut", "intersect", "newsolid"].map((o) => this.sq(o, this.op === o, () => (this.op = o)))}
          </div>
          <div>
            <fieldset class="ext"><legend>Extents</legend>
              <div class="fields">
                <div class="combo"><select aria-label="Extents"><option>Distance</option><option>To Next</option><option>To</option><option>Between</option><option>All</option></select>
                  <svg width="9" height="9" viewBox="0 0 9 9"><path d="M1 3l3.500 3L8 3" fill="none" stroke="#333" stroke-width="1.400"/></svg></div>
                <div class="combo edit"><input aria-label="Distance value" value="1.5" />
                  <svg width="9" height="9" viewBox="0 0 9 9"><path d="M3 1l3 3.500L3 8" fill="none" stroke="#333" stroke-width="1.400"/></svg></div>
              </div>
              <div class="dirs">${["dir1", "dir2", "dir3", "dir4"].map((d) => this.sq(d, this.dir === d, () => (this.dir = d)))}</div>
            </fieldset>
            <label class="match"><input type="checkbox" disabled />Match shape</label>
          </div>
        </div>
        <div class="foot">
          ${this.sq("help")}
          <label><input type="checkbox" checked aria-label="Preview" />
            <svg width="26" height="12" viewBox="0 0 26 12"><g fill="#d6ecec" stroke="#2d4a46" stroke-width="1.500"><path d="M2 5h7v5H3z"/><path d="M13 5h7l-1 5h-5z"/><path d="M9 6h4M2 5l3-4 2 1M20 5l3-4 1 3" fill="none"/></g></svg>
          </label>
          <button class="push">OK</button><button class="push">Cancel</button>
        </div>
        <button class="fold" aria-label="Collapse"><svg width="9" height="8" viewBox="0 0 9 8"><path d="M4.500 0L9 8H0z" fill="#111"/></svg></button>
      </div>
    </section>`;
  }

  render() {
    return html`
      <nav class="tabs">
        <div class="logo"><svg width="16" height="8" viewBox="0 0 16 8"><path d="M1 0h14l-3 7H3z" fill="#e2681c"/><path d="M5 0h3l-1 6z" fill="#8c2f10"/></svg><span>PRO</span></div>
        <a class="on" href="#model">3D Model</a>
        ${tabs.map((t) => html`<a href="#tab">${t}</a>`)}
        <span class="extra"><svg width="11" height="6" viewBox="0 0 11 6"><rect width="11" height="6" rx="1" fill="#eee"/><path d="M5.500 1.500L8 4.500H3z" fill="#444"/></svg><i class="caret tiny"></i></span>
      </nav>
      <div class="ribbon">
        ${panels.map((p) => html`<section class="panel ${p.key}">
          <div class="tools">
            ${p.big.map((b) => this.bigTool(b))}
            ${p.cols.map((c) => html`<div class="col">${c.map((t) => this.tool(t))}</div>`)}
          </div>
          <h2>${p.title}${p.more ? html`<i class="caret"></i>` : ""}</h2>
        </section>`)}
      </div>
      <main class="work-area">
        <aside class="side">
          <div class="grip"><i class="caret"></i></div>
          <h3>Model <i class="caret"></i></h3>
          <div class="sbar">
            <svg width="12" height="12" viewBox="0 0 12 12"><path d="M1 1h10L7 6v5H5V6z" fill="#aaa" stroke="#333" stroke-width="1.500"/></svg><i></i>
            <svg width="14" height="12" viewBox="0 0 14 12"><path d="M3 0h3v3h2V0h3l3 8v4H9V8H5v4H0V8z" fill="#222"/><path d="M2 8h2M10 8h2" stroke="#999"/></svg>
          </div>
          <ul class="tree">
            <li>${icon("cube")}Part1</li>
            ${tree.map((n, i) => html`<li>
              <svg class="twig" viewBox="0 0 14 15"><path d=${i === tree.length - 1 ? "M4.500 0v7.500H13" : "M4.500 0v15M4 7.500h9"} fill="none" stroke="#999"/>
                ${n.plus ? svg`<path d="M1.500 4.500h6v6h-6z" fill="#fff" stroke="#777"/><path d="M3 7.500h3M4.500 6v3" stroke="#222"/>` : ""}</svg>
              ${icon(n.icon)}${n.text}</li>`)}
          </ul>
        </aside>
        <div class="view">
          ${this.scene()}
          <div class="winctl">
            <svg viewBox="0 0 11 11"><path d="M1 7h9" stroke="#eee" stroke-width="2"/></svg>
            <svg viewBox="0 0 11 11"><path d="M4 3V1h6v6H8M2 4h5v5H2z" fill="none" stroke="#eee" stroke-width="1.600"/></svg>
            <svg viewBox="0 0 11 11"><path d="M2 2l7 7M9 2L2 9" stroke="#eee" stroke-width="2"/></svg>
          </div>
          <div class="nav">
            <svg class="end" width="7" height="7" viewBox="0 0 7 7"><circle cx="3.500" cy="3.500" r="2.500" fill="none" stroke="#555"/></svg>
            <button aria-label="Steering wheel"><svg width="18" height="18" viewBox="0 0 18 18"><path d="M9 1h8v8a8 8 0 1 1-8-8z" fill="#b4b4b4"/><circle cx="9" cy="9" r="5" fill="#999" stroke="#ddd" stroke-width="1.500"/></svg></button>
            <i class="caret tiny"></i><hr />
            <button aria-label="Pan"><svg width="14" height="14" viewBox="0 0 14 14"><path d="M4 13L1 8l1-1 2 2V3h1.500v4V1H7v6l.5-6H9v6l1-5h1.500l-1 8-1 3z" fill="#ddd"/></svg></button>
            <button aria-label="Zoom"><svg width="14" height="13" viewBox="0 0 14 13"><circle cx="5" cy="5" r="4" fill="#c8c8c8" stroke="#e0e0e0"/><path d="M8 8l4 4" stroke="#444" stroke-width="2"/><path d="M10 1h3l-3 3h3" fill="none" stroke="#666"/></svg></button>
            <i class="caret tiny"></i>
            <button aria-label="Orbit"><svg width="14" height="14" viewBox="0 0 14 14"><path d="M7 0l3 3H4zM7 14l3-3H4zM0 7l3-3v6zM14 7l-3-3v6z" fill="#777"/><circle cx="7" cy="7" r="3" fill="none" stroke="#6a6a6a"/></svg></button>
            <i class="caret tiny"></i>
            <button aria-label="Look at"><svg width="13" height="11" viewBox="0 0 13 11"><path d="M1 3h11v7H1z" fill="#999" stroke="#ddd" stroke-width="1.400"/><path d="M3 1h4M4 6h5" stroke="#ddd"/></svg></button>
            <svg class="end" width="7" height="7" viewBox="0 0 7 7"><circle cx="3.500" cy="3.500" r="2.500" fill="none" stroke="#555"/></svg>
          </div>
          <div class="mini">
            <span class="hold"></span>
            <div class="pill">
              <button class="pick" aria-label="Extent type">${icon("mDist")}<i class="caret"></i></button>
              <input aria-label="Distance" value="1.5" />
              <button class="go" aria-label="More values"><svg width="6" height="8" viewBox="0 0 6 8"><path d="M0 0l6 4-6 4z" fill="#222"/></svg></button>
            </div>
          </div>
          <ul class="menu">
            ${extents.map((e, i) => html`<li><button class=${classMap({ hot: i === this.hot })} @mouseenter=${() => (this.hot = i)}>${icon(e.icon)}${e.text}</button></li>`)}
          </ul>
          <svg class="pointer" width="11" height="16" viewBox="0 0 11 16"><path d="M1 1v12l3-3 2 5 2-1-2-5h4z" fill="#fff" stroke="#444"/></svg>
        </div>
        ${this.dialog()}
        <svg class="arrow" width="112" height="14" viewBox="0 0 112 14"><path d="M2 7h94" stroke="#f80000" stroke-width="3" stroke-linecap="round"/><path d="M94 0l18 7-18 7z" fill="#f80000"/></svg>
      </main>
      <footer class="status"><span>Select a feature or dimension</span><span>1</span><span>1</span><i class="tail"></i></footer>
      <div class="brand">AmazeInvent</div>
    `;
  }
}
